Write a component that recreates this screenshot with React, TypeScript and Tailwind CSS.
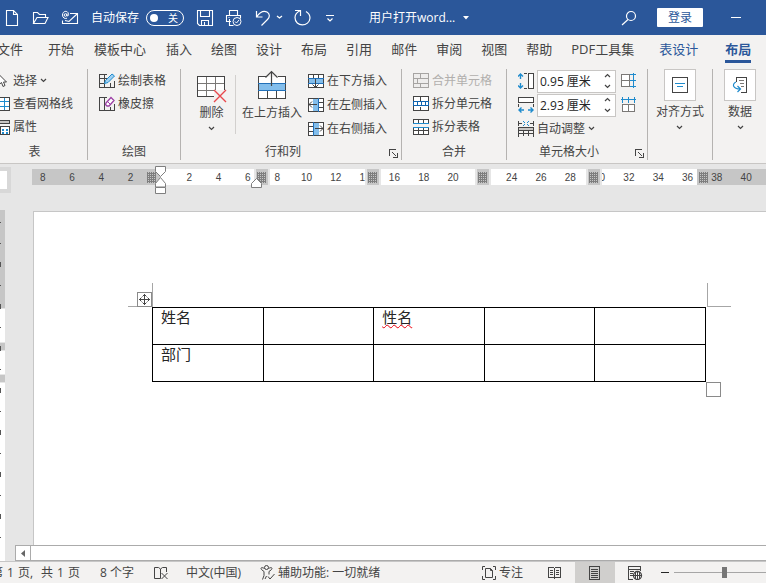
import type { ReactNode } from 'react';

const INK = '#444444';
const BLUE = '#1e8bcd';
const LIGHT = '#83beec';

type SvgProps = { w?: number; h?: number; stroke?: string; crisp?: boolean; children: ReactNode };

function Svg({ w = 16, h = 16, stroke = INK, crisp = false, children }: SvgProps) {
  return (
    <svg
      width={w}
      height={h}
      viewBox={`0 0 ${w} ${h}`}
      fill="none"
      stroke={stroke}
      shapeRendering={crisp ? 'crispEdges' : 'auto'}
      className="block shrink-0"
      aria-hidden="true"
    >
      {children}
    </svg>
  );
}

function Chevron() {
  return (
    <Svg w={7} h={5}>
      <path d="M1 1l2.5 2.5L6 1" strokeWidth="1.2" />
    </Svg>
  );
}

/* ---------- Title bar ---------- */

function TitleBar() {
  return (
    <header className="flex h-[35px] shrink-0 items-center bg-[#2b579a] pl-1 text-white">
      <button aria-label="新建" className="w-[28px] pl-px">
        <Svg w={14} h={18} stroke="#fff">
          <path d="M1.5 1.5h7l4 4v11h-11zM8.5 1.5v4h4" strokeWidth="1.1" />
        </Svg>
      </button>
      <button aria-label="打开" className="w-[29px]">
        <Svg w={18} h={16} stroke="#fff">
          <path d="M1.5 13.500v-11h4l2 2h6v3M1.500 13.500l3.500-6h11l-3 6z" strokeWidth="1.1" />
        </Svg>
      </button>
      <button aria-label="电子邮件" className="w-[30px]">
        <Svg w={18} h={16} stroke="#fff">
          <path d="M9 3.500h7.500v10h-15v-3M4 10.500l4 1 8-7.500" strokeWidth="1.1" />
          <circle cx="4.500" cy="5" r="1.300" />
          <path d="M6 3.500v2.300c1.500.6 1.700-1 1.500-2C6.700 0 1.500.8 1.500 5c0 3 2.500 4 4.500 3.200" />
        </Svg>
      </button>
      <span className="text-xs">自动保存</span>
      <button
        role="switch"
        aria-checked="false"
        aria-label="自动保存"
        className="ml-[7px] flex h-4 w-[38px] items-center justify-between rounded-full border border-white pr-[5px] pl-[3px]"
      >
        <span className="size-2 rounded-full bg-white" />
        <span className="text-[10px] leading-3">关</span>
      </button>
      <button aria-label="保存" className="ml-3 w-[29px]">
        <Svg w={18} h={18} stroke="#fff">
          <path d="M1.500 1.500h15v15h-13l-2-2zM4.500 1.500v6h9v-6M5.500 16.500v-5h7v5M8.500 13v3" strokeWidth="1.1" />
        </Svg>
      </button>
      <button aria-label="打印预览" className="w-[30px]">
        <Svg w={18} h={18} stroke="#fff">
          <path d="M4.500 6.500v-5h8v5M6 12.500H1.500v-6h14v3M4.500 10v6.500h4M3.500 8.500h1" strokeWidth="1.1" />
          <circle cx="12" cy="12.500" r="4" />
          <path d="M10 12.500l1.500 1.500 2.500-3" />
        </Svg>
      </button>
      <button aria-label="撤消" className="flex items-center gap-1">
        <Svg w={17} h={18} stroke="#fff">
          <path d="M1.500 2v6h6M1.500 8C5 3 9 1.500 12 3c3 1.700 3 5 .5 7.500l-6 6" strokeWidth="1.200" />
        </Svg>
        <Svg w={7} h={5} stroke="#fff">
          <path d="M1 1l2.500 2L6 1" strokeWidth="1.300" />
        </Svg>
      </button>
      <button aria-label="恢复" className="ml-2.5">
        <Svg w={18} h={18} stroke="#fff">
          <path d="M7.500 7V1.500H2M7.500 1.500C4 3 2 5 2 8.500c0 10 14.500 9.500 15 .5 0-3-1.500-5-4-6.500" strokeWidth="1.200" />
        </Svg>
      </button>
      <button aria-label="自定义快速访问工具栏" className="ml-[15px]">
        <Svg w={8} h={8} stroke="#fff">
          <path d="M0 1.500h8M1.500 4.500L4 7l2.500-2.500" strokeWidth="1.200" />
        </Svg>
      </button>
      <button className="ml-[35px] flex items-center gap-2 text-xs">
        <span>用户打开word...</span>
        <svg width="6" height="4" viewBox="0 0 6 4" fill="#fff" aria-hidden="true">
          <path d="M0 0h6L3 3.500z" />
        </svg>
      </button>
      <span className="flex-1" />
      <button aria-label="搜索" className="mr-5">
        <Svg w={16} h={16} stroke="#fff">
          <circle cx="10" cy="6" r="4.500" strokeWidth="1.200" />
          <path d="M7 9.500L1 15" strokeWidth="1.200" />
        </Svg>
      </button>
      <button className="mr-7 h-[19px] w-[46px] rounded-[1px] bg-white text-xs leading-[19px] text-[#2b579a]">登录</button>
      <button aria-label="最小化" className="mr-[25px] h-4">
        <span className="block h-px w-2.5 bg-white" />
      </button>
    </header>
  );
}

/* ---------- Tabs ---------- */

const TABS = ['插入', '绘图', '设计', '布局', '引用', '邮件', '审阅', '视图', '帮助', 'PDF工具集'];

function Tabs() {
  return (
    <nav className="flex h-[30px] shrink-0 items-center gap-[19px] overflow-hidden text-[13px] whitespace-nowrap">
      <button className="-ml-[3px] mr-1.5">文件</button>
      <button>开始</button>
      <button className="mx-px">模板中心</button>
      {TABS.map((t) => (
        <button key={t}>{t}</button>
      ))}
      <button className="ml-1.5 text-[#2b579a]">表设计</button>
      <button className="ml-2 border-b-[3px] border-[#2b579a] pt-[3px] font-bold text-[#2b579a]">布局</button>
    </nav>
  );
}

/* ---------- Ribbon ---------- */

function Group({ label, className, launcher, children }: { label: string; className: string; launcher?: boolean; children: ReactNode }) {
  return (
    <section className={`my-[3px] flex shrink-0 flex-col border-r border-[#b5b3b1] ${className}`}>
      <div className="flex h-[77px]">{children}</div>
      <div className="flex h-4 items-center">
        <span className="flex-1 text-center">{label}</span>
        {launcher && (
          <button aria-label={`${label}设置`} className="mr-[3px] ml-1 pt-0.5">
            <Svg w={9} h={9} crisp>
              <path d="M.5 7V.5H7M3 3l4.500 4.500M8.500 4v4.500H4" />
            </Svg>
          </button>
        )}
      </div>
    </section>
  );
}

function Item({ icon, text, arrow, disabled, className = 'h-[23px]' }: { icon: ReactNode; text: string; arrow?: boolean; disabled?: boolean; className?: string }) {
  return (
    <button disabled={disabled} className={`flex items-center gap-[3px] whitespace-nowrap disabled:text-[#b1afad] ${className}`}>
      {icon}
      <span>{text}</span>
      {arrow && <Chevron />}
    </button>
  );
}

const cursorIcon = (
  <Svg>
    <path d="M4.500 1v11l3-2.500 1.500 4 2-1-1.500-3.500h3z" fill="#fff" />
  </Svg>
);
const gridIcon = (
  <Svg crisp>
    <path d="M1 1.500h14.500v13H1z" fill="#fff" />
    <path d="M1 5.500h14M1 10.500h14M10.500 2v12M5.500 2v12" stroke={BLUE} />
  </Svg>
);
const propIcon = (
  <Svg crisp>
    <path d="M1 1.500h14.500v3H1z" fill="#c8c6c4" />
    <path d="M1.500 4.500v10h4M6.500 7.500h9v8h-9z" fill="#fff" />
    <path d="M8 10.500h2M8 13.500h2M12 10.500h2M12 13.500h2" stroke={BLUE} strokeWidth="2" />
  </Svg>
);
const drawIcon = (
  <Svg>
    <path d="M8 1.500H.5v13h15V8M.5 5.500h7M.5 10.500h5M5.500 1.500v13M11.500 10v4.500" shapeRendering="crispEdges" />
    <path d="M5.500 10.500l1-3L13 1l2.500 2L9 9.500z" fill="#9ed0f2" stroke={BLUE} />
  </Svg>
);
const eraseIcon = (
  <Svg>
    <path d="M8 1.500H.5v13h15V8M5.500 1.500v13M11.500 11v3.500" shapeRendering="crispEdges" />
    <path d="M7 7l5-5.500 3 3L10 10H8L6.500 8.500z" fill="#fff" stroke="#9b3fa5" strokeWidth="1.300" />
    <path d="M8.500 5.500l3 3" stroke="#9b3fa5" />
  </Svg>
);
const insertBelow = (
  <Svg crisp>
    <path d="M.5 1.500h15v13H.5z" fill="#fff" />
    <path d="M1 5h14v5H1z" fill={LIGHT} stroke="none" />
    <path d="M0 5.500h16M0 10.500h16" stroke="#2270b8" />
    <path d="M5.500 2v3M10.500 2v3" />
    <path d="M7.500 6v8M4.500 11.500l3 3 3-3" shapeRendering="auto" />
  </Svg>
);
const insertLeft = (
  <Svg crisp>
    <path d="M.5 1.500h15v13H.5z" fill="#fff" />
    <path d="M5 2h5v12H5z" fill={LIGHT} stroke="none" />
    <path d="M10.500 1v14" stroke="#2270b8" />
    <path d="M11 5.500h4M11 10.500h4" />
    <path d="M1 7.500h8M4 4.500l-3 3 3 3" shapeRendering="auto" />
  </Svg>
);
const insertRight = (
  <Svg crisp>
    <path d="M.5 1.500h15v13H.5z" fill="#fff" />
    <path d="M6 2h5v12H6z" fill={LIGHT} stroke="none" />
    <path d="M5.500 1v14" stroke="#2270b8" />
    <path d="M1 5.500h4M1 10.500h4" />
    <path d="M7 7.500h8M12 4.500l3 3-3 3" shapeRendering="auto" />
  </Svg>
);
const mergeIcon = (
  <Svg crisp stroke="#a6a4a2">
    <path d="M.5 .5h15v14H.5zM0 5.500h16M0 10.500h16M7.500 0v5M7.500 11v4M4.500 6v4" fill="#eeedec" />
  </Svg>
);
const splitIcon = (
  <Svg crisp>
    <path d="M.5 .5h15v14H.5zM7.500 0v5M7.500 11v4" fill="#fff" />
    <path d="M0 5.500h16M0 9.500h16M.5 5v5M15.500 5v5M4.500 5v4M8.500 5v4M12.500 5v4" stroke="#1065b0" />
  </Svg>
);
const splitTableIcon = (
  <Svg crisp>
    <path d="M.5 5V.5h15V5M5.500 1v4M10.500 1v4M.5 8v7.500h15V8M1 11.500h14M5.500 9v6M10.500 9v6" fill="#fff" />
    <path d="M0 4.500h16M0 8.500h16" stroke={BLUE} />
  </Svg>
);
const autofitIcon = (
  <Svg crisp>
    <path d="M.5 0v5M15.500 0v5M1 2.500h3M12 2.500h3" />
    <path d="M.5 6.500h15v3H.5z" fill="#c8c6c4" />
    <path d="M.5 9.500v6M15.500 9.500v6M5.500 10v5M10.500 10v5M1 12.500h14" />
    <path d="M5 0l2 2M11 0L9 2M5 5l2-2M11 5L9 3" stroke={BLUE} shapeRendering="auto" />
  </Svg>
);
const heightIcon = (
  <Svg>
    <path d="M10.500 .5h5v15h-5z" fill="#fff" shapeRendering="crispEdges" />
    <path d="M2.500 1v5M2.500 10v5M0 3.500L2.500 1 5 3.500M0 12.500L2.500 15 5 12.500" stroke={BLUE} strokeWidth="1.400" />
    <path d="M6 .5h3M6 15.500h3" shapeRendering="crispEdges" />
  </Svg>
);
const widthIcon = (
  <Svg>
    <path d="M.5 .5h15v5H.5z" fill="#fff" shapeRendering="crispEdges" />
    <path d="M.5 7v3M15.500 7v3" shapeRendering="crispEdges" />
    <path d="M1 13h5M10 13h5M3.500 10.500L1 13l2.500 2.500M12.500 10.500L15 13l-2.500 2.500" stroke={BLUE} strokeWidth="1.400" />
  </Svg>
);
const distRows = (
  <Svg crisp stroke={BLUE}>
    <path d="M.5 1.500h8v12h-8zM0 7.500h9" fill="#fff" stroke="#7a7876" />
    <path d="M12.500 0v15M9 1.500h6M9 7.500h6M9 13.500h6" />
  </Svg>
);
const distCols = (
  <Svg crisp stroke={BLUE}>
    <path d="M1.500 7.500h12v7h-12zM7.500 8v6" fill="#fff" stroke="#7a7876" />
    <path d="M0 2.500h15M1.500 0v6M7.500 0v6M13.500 0v6" />
  </Svg>
);

function SizeField({ icon, label, value, after }: { icon: ReactNode; label: string; value: string; after: ReactNode }) {
  return (
    <div className="flex h-6 items-center">
      {icon}
      <div className="mx-[3px] flex h-[23px] w-[79px] shrink-0 items-center border border-[#c8c6c4] bg-white">
        <input aria-label={label} defaultValue={value} className="h-full w-[62px] min-w-0 pl-0.5 text-xs text-[#262626] outline-none" />
        <div className="ml-1 flex flex-col gap-1.5">
          <button aria-label={`增加${label}`} className="rotate-180">
            <Chevron />
          </button>
          <button aria-label={`减少${label}`}>
            <Chevron />
          </button>
        </div>
      </div>
      <button aria-label={`平均分布${label}`} className="ml-0.5">
        {after}
      </button>
    </div>
  );
}

function BoxButton({ icon, text }: { icon: ReactNode; text: string }) {
  return (
    <button className="flex shrink-0 flex-col items-center whitespace-nowrap">
      <span className="flex size-8 items-center justify-center border border-[#c8c6c4] bg-white">{icon}</span>
      <span className="mt-0.5 mb-1 leading-[18px]">{text}</span>
      <Chevron />
    </button>
  );
}

function Ribbon() {
  return (
    <div className="flex h-[99px] shrink-0 overflow-hidden border-b border-[#c8c6c4] pt-px text-xs">
      <Group label="表" className="w-[88px] pr-[18px]">
        <div className="-ml-1.5 flex flex-col">
          <Item icon={cursorIcon} text="选择" arrow />
          <Item icon={gridIcon} text="查看网格线" />
          <Item icon={propIcon} text="属性" />
        </div>
      </Group>
      <Group label="绘图" className="w-[93px]">
        <div className="ml-[11px] flex flex-col">
          <Item icon={drawIcon} text="绘制表格" />
          <Item icon={eraseIcon} text="橡皮擦" />
        </div>
      </Group>
      <Group label="行和列" className="w-[221px]" launcher>
        <button className="ml-[15px] flex w-[31px] shrink-0 flex-col items-center pt-1.5">
          <Svg w={30} h={29}>
            <path d="M.5 1.500h27v20H.500z" fill="#fff" shapeRendering="crispEdges" />
            <path d="M0 8.500h28M0 15.500h28M9.500 2v20M18.500 2v20" stroke="#7a7876" shapeRendering="crispEdges" />
            <path d="M.5 1.500h27v20H.500z" shapeRendering="crispEdges" />
            <path d="M17 15h13v14H17z" fill="#f3f2f1" stroke="none" />
            <path d="M17 15l12 12M29 15L17 27" stroke="#e8484d" strokeWidth="1.400" />
          </Svg>
          <span className="leading-[18px] whitespace-nowrap">删除</span>
          <span className="mt-1">
            <Chevron />
          </span>
        </button>
        <div className="mt-1.5 mr-1.5 ml-2 h-[59px] w-px bg-[#d2d0ce]" />
        <button className="flex shrink-0 flex-col items-center self-start whitespace-nowrap">
          <Svg w={28} h={35}>
            <path d="M.5 8v21h27V8" fill="#fff" shapeRendering="crispEdges" />
            <path d="M1 14h26v7H1z" fill={LIGHT} stroke="none" />
            <path d="M0 14.500h28M0 21.500h28" stroke="#2270b8" shapeRendering="crispEdges" />
            <path d="M0 7.500h8M20 7.500h8M9.500 22v7M18.500 22v7" shapeRendering="crispEdges" />
            <path d="M13.500 17V2.500M7.500 8.500l6-6 6 6" strokeWidth="1.200" />
          </Svg>
          <span className="leading-[18px]">在上方插入</span>
        </button>
        <div className="ml-1.5 flex flex-col">
          <Item icon={insertBelow} text="在下方插入" className="h-6" />
          <Item icon={insertLeft} text="在左侧插入" className="h-6" />
          <Item icon={insertRight} text="在右侧插入" className="h-6" />
        </div>
      </Group>
      <Group label="合并" className="w-[105px]">
        <div className="ml-[11px] flex flex-col">
          <Item icon={mergeIcon} text="合并单元格" disabled />
          <Item icon={splitIcon} text="拆分单元格" />
          <Item icon={splitTableIcon} text="拆分表格" />
        </div>
      </Group>
      <Group label="单元格大小" className="w-[141px]" launcher>
        <div className="ml-[11px] flex flex-col">
          <SizeField icon={heightIcon} label="行高" value="0.95 厘米" after={distRows} />
          <SizeField icon={widthIcon} label="列宽" value="2.93 厘米" after={distCols} />
          <Item icon={autofitIcon} text="自动调整" arrow />
        </div>
      </Group>
      <Group label="" className="w-[65px] items-center">
        <BoxButton
          text="对齐方式"
          icon={
            <Svg crisp>
              <path d="M.5 .5h15v15H.500z" />
              <path d="M3 6.500h10M5 9.500h6" stroke={BLUE} />
            </Svg>
          }
        />
      </Group>
      <div className="flex min-w-[53px] items-start py-[3px] pl-[11px]">
        <BoxButton
          text="数据"
          icon={
            <Svg>
              <path d="M4.500 5V.5h10v15H9" shapeRendering="crispEdges" />
              <path d="M7 3.500h5M8 6.500h4M9 9.500h3" stroke="#7a7876" />
              <path d="M4 5C-.5 7 1 12 8 12M5.500 9L8.500 12l-3 3" stroke={BLUE} strokeWidth="1.200" />
            </Svg>
          }
        />
      </div>
    </div>
  );
}

/* ---------- Horizontal ruler ---------- */

const RULER = ['8', '6', '4', '2', '', '2', '4', '6', '8', '10', '12', '14', '16', '18', '20', '', '24', '26', '28', '30', '32', '34', '36', '38', '40'];

function Hatch() {
  return (
    <Svg w={10} h={11} crisp stroke="#6b6b6b">
      <path d="M.5 0v11M2.500 0v11M4.500 0v11M6.500 0v11M8.500 0v11M0 1.500h9M0 3.500h9M0 5.500h9M0 7.500h9M0 9.500h9" strokeOpacity=".8" />
    </Svg>
  );
}

function ColumnMark({ className }: { className: string }) {
  return (
    <span className={`absolute top-0 flex h-4 w-4 items-center justify-center border-x-2 border-[#e6e6e6] bg-[#c6c6c6] ${className}`}>
      <Hatch />
    </span>
  );
}

function Ruler() {
  return (
    <div className="flex h-[46px] shrink-0 items-start overflow-hidden pt-[3px]">
      <div className="h-[26px] w-[11px] shrink-0 border-4 border-l-0 border-[#d8d8d8] bg-white" />
      <div className="relative mt-0.5 ml-[21px] flex h-4 flex-1 text-[10px]">
        <div className="w-32 bg-[#c6c6c6]" />
        <div className="w-[537px] bg-white" />
        <div className="flex-1 bg-[#c6c6c6]" />
        <div className="absolute top-0 -left-1 flex w-[733px] font-['Liberation_Sans',sans-serif] leading-[17px]">
          {RULER.map((n, i) => (
            <span key={i} className="flex-1 text-center">
              {n}
            </span>
          ))}
        </div>
        <span className="absolute top-[3px] left-[115px]">
          <Hatch />
        </span>
        <ColumnMark className="left-[222px]" />
        <ColumnMark className="left-[333px]" />
        <ColumnMark className="left-[443px]" />
        <ColumnMark className="left-[554px]" />
        <span className="absolute top-[3px] left-[667px]">
          <Hatch />
        </span>
        <span className="absolute -top-[3px] left-[123px]">
          <Svg w={11} h={28} stroke="#7f7f7f">
            <path d="M.5 .5h10v5l-5 5-5-5zM.5 21v-3.500l5-6 5 6V21zM.5 21.500h10v6H.500z" fill="#fff" />
          </Svg>
        </span>
        <span className="absolute top-2 left-[219px]">
          <Svg w={11} h={11} stroke="#7f7f7f">
            <path d="M.5 10.500v-4l5-5 5 5v4z" fill="#fff" />
          </Svg>
        </span>
      </div>
    </div>
  );
}

/* ---------- Document ---------- */

function VerticalRuler() {
  return (
    <div className="relative flex w-[5px] shrink-0 flex-col gap-px">
      <div className="h-[98px] bg-[#c6c6c6]" />
      <div className="h-[33px] bg-white" />
      <div className="h-[7px] bg-[#c6c6c6]" />
      <div className="h-[23px] bg-white" />
      <div className="h-[7px] bg-[#c6c6c6]" />
      <div className="flex-1 bg-white" />
      <div className="absolute inset-y-3 left-0 w-px bg-[repeating-linear-gradient(#555_0px,#555_1px,transparent_1px,transparent_21px)]" />
      <div className="absolute inset-y-5 left-0 w-px bg-[repeating-linear-gradient(transparent_0px,transparent_32px,#555_32px,#555_37px,transparent_37px,transparent_42px)]" />
    </div>
  );
}

const ROWS = [
  ['姓名', '', '性名', '', ''],
  ['部门', '', '', '', ''],
];

function Page() {
  return (
    <div className="mt-px ml-7 flex-1 overflow-hidden border-t border-l border-[#c6c6c6] bg-white pt-[95px] pl-[118px]">
      <div className="relative w-[554px]">
        <span className="absolute -top-6 left-0 h-6 w-px bg-[#a6a6a6]" />
        <span className="absolute -top-px -left-6 h-px w-6 bg-[#a6a6a6]" />
        <button aria-label="移动表格" className="absolute -top-[15px] -left-[15px] flex size-[15px] items-center justify-center border border-[#8a8a8a] bg-white">
          <Svg w={11} h={11}>
            <path d="M5.500 0v11M0 5.500h11" shapeRendering="crispEdges" />
            <path d="M3.500 2.500l2-2 2 2M3.500 8.500l2 2 2-2M2.500 3.500l-2 2 2 2M8.500 3.500l2 2-2 2" />
          </Svg>
        </button>
        <span className="absolute -top-6 left-[555px] h-6 w-6 border-b border-l border-[#a6a6a6]" />
        <table className="w-full table-fixed border-collapse text-[15px] text-[#262626]">
          <tbody>
            {ROWS.map((row, r) => (
              <tr key={r} className="h-[37px]">
                {row.map((cell, c) => (
                  <td key={c} className="border border-black p-0 pl-2 align-top leading-[18px]">
                    {cell === '性名' ? (
                      <span className="underline decoration-red-600 decoration-wavy decoration-1 underline-offset-1">{cell}</span>
                    ) : (
                      cell
                    )}
                  </td>
                ))}
              </tr>
            ))}
          </tbody>
        </table>
        <span className="absolute top-full left-full size-[15px] border border-[#8a8a8a] bg-white" />
      </div>
    </div>
  );
}

/* ---------- Status bar ---------- */

function StatusBar() {
  return (
    <footer className="flex h-[22px] shrink-0 items-center overflow-hidden border-t border-[#c6c6c6] bg-[#f3f2f1] text-xs whitespace-nowrap">
      <span className="-ml-[9px] flex gap-1">
        <span>第</span>
        <span>1</span>
        <span className="mr-1">页,</span>
        <span>共</span>
        <span>1</span>
        <span>页</span>
      </span>
      <span className="ml-5">8 个字</span>
      <button aria-label="校对" className="ml-5">
        <Svg w={15} h={14}>
          <path d="M6.500 12.500h-6V1.500h4l2 1.500v9.500M6.500 3l2-1.500h4V6M7.500 7l6 6M13.500 7l-6 6" />
        </Svg>
      </button>
      <button className="ml-[17px]">中文(中国)</button>
      <button className="ml-[19px] flex items-center gap-[3px]">
        <Svg w={15} h={15}>
          <circle cx="6.500" cy="2.500" r="2" />
          <path d="M4.500 3.500C1 1.500 0 3.500 2 5l2 1.500v4l-1.500 4M8.500 3.500C12 1.500 13 3.500 11 5L9 6.500v3M5 14l1.500-3M8 11.500l2 2.500 4.500-5" />
        </Svg>
        <span>辅助功能: 一切就绪</span>
      </button>
      <span className="flex-1" />
      <button className="flex items-center gap-[3px]">
        <Svg w={14} h={14}>
          <path d="M3 .5H.500V4M11 .5h2.500V4M3 13.500H.500V10M11 13.500h2.500V10M3.500 2.500h5l2 2v7h-7zM8.500 2.500v2h2" />
        </Svg>
        <span>专注</span>
      </button>
      <button aria-label="阅读视图" className="ml-[25px]">
        <Svg w={13} h={13} crisp>
          <path d="M.5 1.500h5l1 1 1-1h5v10h-5l-1 1-1-1h-5zM6.500 2v11M2 4.500h3M2 6.500h3M2 8.500h3M8 4.500h3M8 6.500h3M8 8.500h3" />
        </Svg>
      </button>
      <button aria-label="页面视图" className="ml-3.5 flex h-full w-10 items-center justify-center bg-[#d0cfcd]">
        <Svg w={12} h={14} crisp>
          <path d="M.5 .5h10v13H.500zM2 3.500h7M2 5.500h7M2 7.500h7M2 9.500h7M2 11.500h7" />
        </Svg>
      </button>
      <button aria-label="Web 版式视图" className="ml-[13px]">
        <Svg w={15} h={14}>
          <path d="M5 13.500H.500V.5h12V5M0 3.500h12M2 5.500h4M2 7.500h3M2 9.500h3" shapeRendering="crispEdges" />
          <circle cx="9.500" cy="9.500" r="4" fill="#fff" strokeWidth="1.300" />
          <path d="M5.500 9.500h8M9.500 5.500v8M7.500 6v7M11.500 6v7" />
        </Svg>
      </button>
      <button aria-label="缩小" className="ml-[18px] flex h-3 items-center">
        <span className="block h-px w-2 bg-[#262626]" />
      </button>
      <input
        type="range"
        aria-label="显示比例"
        defaultValue={55}
        className="ml-[5px] h-3 w-[92px] appearance-none bg-transparent bg-[linear-gradient(#a6a6a6,#a6a6a6)] bg-[length:100%_1px] bg-center bg-no-repeat [&::-webkit-slider-thumb]:h-[11px] [&::-webkit-slider-thumb]:w-[5px] [&::-webkit-slider-thumb]:appearance-none [&::-webkit-slider-thumb]:bg-[#767676]"
      />
    </footer>
  );
}

export default function App() {
  return (
    <div className="flex h-screen flex-col overflow-hidden bg-[#e6e6e6] font-['Open_Sans','Noto_Sans_CJK_SC',sans-serif] text-[#444444]">
      <TitleBar />
      <div className="shrink-0 bg-[#f3f2f1]">
        <Tabs />
        <Ribbon />
      </div>
      <Ruler />
      <main className="flex min-h-0 flex-1">
        <VerticalRuler />
        <div className="flex min-w-0 flex-1 flex-col">
          <Page />
          <div className="ml-2.5 flex h-4 shrink-0 border border-r-0 border-[#ababab] bg-white">
            <button aria-label="向左滚动" className="flex w-[15px] items-center justify-center border-r border-[#ababab]">
              <svg width="4" height="7" viewBox="0 0 4 7" fill="#666" aria-hidden="true">
                <path d="M4 0v7L0 3.500z" />
              </svg>
            </button>
          </div>
        </div>
      </main>
      <StatusBar />
    </div>
  );
}
